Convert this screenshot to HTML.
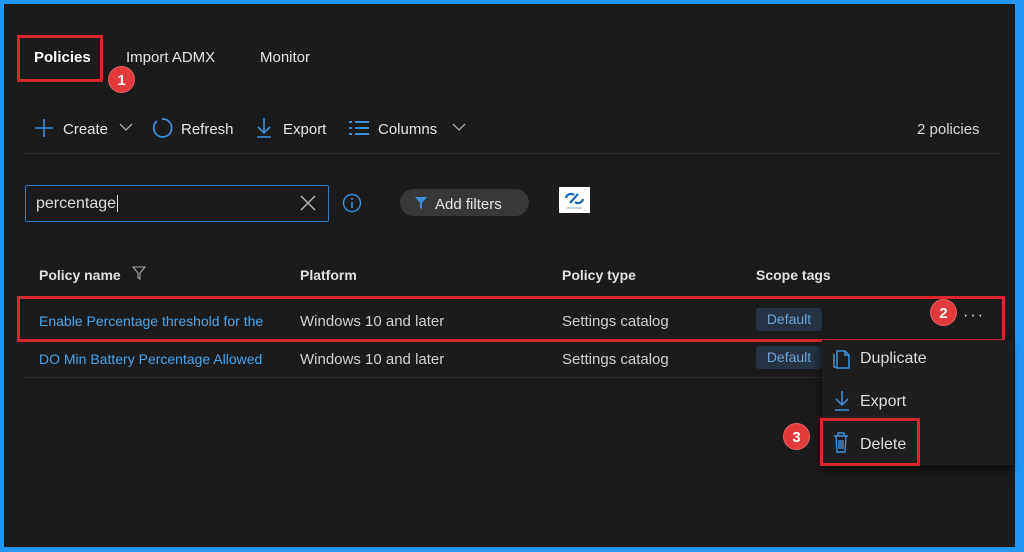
<!DOCTYPE html>
<html><head><meta charset="utf-8"><style>
*{margin:0;padding:0;box-sizing:border-box}
body{width:1024px;height:552px;background:#2196f3;position:relative;overflow:hidden;font-family:"Liberation Sans",sans-serif;color:#e6e6e6}
.pg{position:absolute;left:4px;top:4px;width:1011px;height:543px;background:#1c1b1b}
.a{position:absolute;white-space:nowrap}
.t{font-size:15px}
.red{position:absolute;border:3px solid #d9262f}
.bd{position:absolute;width:27px;height:27px;border-radius:50%;background:#e03a3a;color:#fff;font-weight:bold;font-size:15px;text-align:center;line-height:27px;border:1px solid #fff3}
.h{font-size:14px;font-weight:bold;color:#e0e0e0}
.lnk{color:#4aa3e8;font-size:14px;width:248px;overflow:hidden}
.c{font-size:15px;color:#d0d0d0}
.tag{position:absolute;width:66px;height:23px;background:#253344;color:#6aa6dc;border-radius:3px;font-size:14px;text-align:center;line-height:23px}
</style></head><body>
<div class="pg"></div>
<div class="a t" style="left:34px;top:49px;font-weight:bold;color:#fff">Policies</div>
<div class="a t" style="left:126px;top:49px">Import ADMX</div>
<div class="a t" style="left:260px;top:49px">Monitor</div>
<div class="red" style="left:17px;top:35px;width:86px;height:47px"></div>
<div class="bd" style="left:108px;top:66px">1</div>

<svg class="a" style="left:34px;top:118px" width="20" height="20"><path d="M10 1v18M1 10h18" stroke="#3b8fdc" stroke-width="1.6"/></svg>
<div class="a t" style="left:63px;top:121px">Create</div>
<svg class="a" style="left:119px;top:122px" width="14" height="10"><path d="M1 2l6 6 6-6" stroke="#aaa" fill="none" stroke-width="1.3"/></svg>
<svg class="a" style="left:151px;top:117px" width="22" height="22"><path d="M6 4A9 9 0 1 0 11 2" stroke="#3b8fdc" fill="none" stroke-width="1.8"/></svg>
<div class="a t" style="left:181px;top:121px">Refresh</div>
<svg class="a" style="left:256px;top:117px" width="16" height="22"><path d="M8 1v15M2 10l6 6 6-6M1 20h14" stroke="#3b8fdc" fill="none" stroke-width="1.6"/></svg>
<div class="a t" style="left:283px;top:121px">Export</div>
<svg class="a" style="left:348px;top:120px" width="22" height="16"><path d="M1 2h3M1 8h3M1 14h3M7 2h14M7 8h14M7 14h14" stroke="#3b8fdc" stroke-width="2"/></svg>
<div class="a t" style="left:378px;top:121px">Columns</div>
<svg class="a" style="left:452px;top:122px" width="14" height="10"><path d="M1 2l6 6 6-6" stroke="#aaa" fill="none" stroke-width="1.3"/></svg>
<div class="a t" style="left:917px;top:121px;color:#d8d8d8">2 policies</div>
<div class="a" style="left:24px;top:153px;width:976px;height:1px;background:#2e2c2c"></div>

<div class="a" style="left:25px;top:185px;width:304px;height:37px;border:1px solid #2b7cc0;border-radius:2px"></div>
<div class="a" style="left:36px;top:195px;font-size:16px;color:#ddd">percentage<span style="border-left:1px solid #ddd;margin-left:1px"></span></div>
<svg class="a" style="left:300px;top:195px" width="16" height="16"><path d="M1 1l14 14M15 1L1 15" stroke="#bbb" stroke-width="1.4"/></svg>
<svg class="a" style="left:342px;top:193px" width="20" height="20"><circle cx="10" cy="10" r="8.5" stroke="#3b8fdc" fill="none" stroke-width="1.4"/><path d="M10 9v6" stroke="#3b8fdc" stroke-width="1.6"/><circle cx="10" cy="6" r="1" fill="#3b8fdc"/></svg>
<div class="a" style="left:400px;top:189px;width:129px;height:27px;border-radius:14px;background:#383838"></div>
<svg class="a" style="left:414px;top:195px" width="14" height="15"><path d="M1 2h12l-5 6v6l-2-1v-5z" fill="#3b8fdc"/></svg>
<div class="a t" style="left:435px;top:196px;color:#e8e8e8">Add filters</div>
<div class="a" style="left:559px;top:187px;width:31px;height:26px;background:#fff"><svg width="31" height="26"><path d="M7 11a5 5 0 0 1 8-3M24 12a5 5 0 0 1-8 3M11 16l8-9" stroke="#1566b0" fill="none" stroke-width="2.2"/><path d="M8 21h15" stroke="#8ab" stroke-width="1"/></svg></div>

<div class="a h" style="left:39px;top:267px">Policy name</div>
<svg class="a" style="left:132px;top:266px" width="14" height="14"><path d="M1 1h12l-5 6v6l-2-1V7z" stroke="#aaa" fill="none" stroke-width="1.1"/></svg>
<div class="a h" style="left:300px;top:267px">Platform</div>
<div class="a h" style="left:562px;top:267px">Policy type</div>
<div class="a h" style="left:756px;top:267px">Scope tags</div>

<div class="a lnk" style="left:39px;top:313px">Enable Percentage threshold for the</div>
<div class="a c" style="left:300px;top:313px">Windows 10 and later</div>
<div class="a c" style="left:562px;top:313px">Settings catalog</div>
<div class="tag" style="left:756px;top:308px">Default</div>
<div class="a" style="left:963px;top:307px;font-size:16px;letter-spacing:2px;color:#ddd">···</div>
<div class="red" style="left:17px;top:296px;width:988px;height:46px"></div>
<div class="bd" style="left:930px;top:299px">2</div>

<div class="a lnk" style="left:39px;top:351px">DO Min Battery Percentage Allowed</div>
<div class="a c" style="left:300px;top:351px">Windows 10 and later</div>
<div class="a c" style="left:562px;top:351px">Settings catalog</div>
<div class="tag" style="left:756px;top:346px">Default</div>
<div class="a" style="left:24px;top:377px;width:800px;height:1px;background:#2e2c2c"></div>

<div class="a" style="left:822px;top:340px;width:191px;height:127px;background:#1f1e1e;box-shadow:-2px 4px 8px #0008;border-bottom:2px solid #111"></div>
<svg class="a" style="left:832px;top:347px" width="18" height="22"><path d="M5 4h8l4 4v13H5zM13 4v4h4M2 7v13h3" stroke="#3b8fdc" fill="none" stroke-width="1.5"/></svg>
<div class="a" style="left:860px;top:350px;font-size:16px;color:#ddd">Duplicate</div>
<svg class="a" style="left:834px;top:390px" width="16" height="22"><path d="M8 1v14M2 9l6 6 6-6M1 20h14" stroke="#3b8fdc" fill="none" stroke-width="1.5"/></svg>
<div class="a" style="left:860px;top:393px;font-size:16px;color:#ddd">Export</div>
<svg class="a" style="left:833px;top:432px" width="16" height="22"><path d="M1 4h14M5 4V1h6v3M3 4l1 16h8l1-16M6 8v9M8 8v9M10 8v9" stroke="#3b8fdc" fill="none" stroke-width="1.4"/></svg>
<div class="a" style="left:860px;top:436px;font-size:16px;color:#ddd">Delete</div>
<div class="red" style="left:820px;top:418px;width:100px;height:48px"></div>
<div class="bd" style="left:783px;top:423px">3</div>
</body></html>
